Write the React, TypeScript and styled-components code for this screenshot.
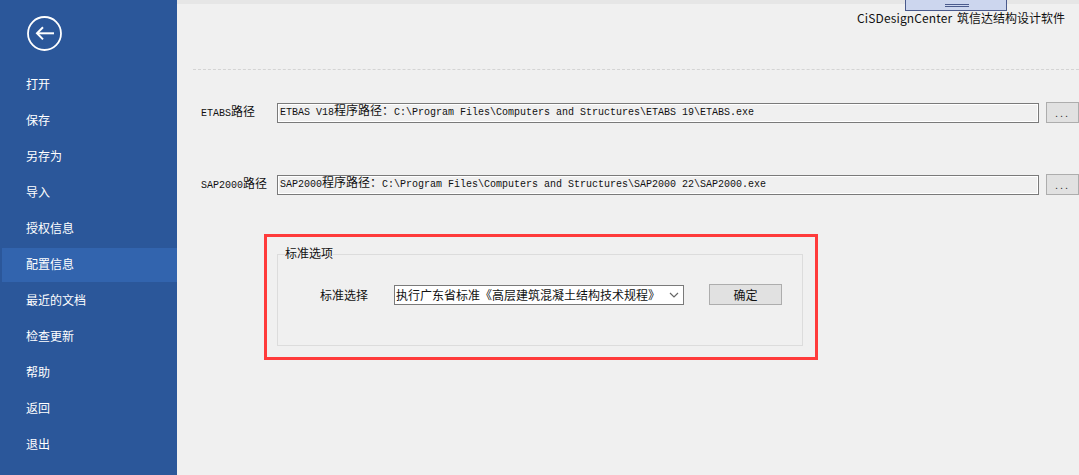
import styled, { createGlobalStyle } from "styled-components";

const Global = createGlobalStyle`
  html, body { margin: 0; padding: 0; background: #f0f0f0; }
  body { font-family: "Noto Sans CJK SC", "Liberation Sans", sans-serif; }
`;

const Page = styled.div`
  display: flex;
  width: 1079px;
  height: 475px;
  overflow: hidden;
`;

const Sidebar = styled.nav`
  display: flex;
  flex-direction: column;
  flex: none;
  width: 177px;
  height: 475px;
  background: #2b579a;
`;

const BackButton = styled.div`
  display: flex;
  margin: 16px 0 0 27px;
  width: 35px;
  height: 35px;
`;

const Menu = styled.div`
  display: flex;
  flex-direction: column;
  gap: 2px;
  margin-top: 17px;
`;

const MenuItem = styled.div<{ $active?: boolean }>`
  display: flex;
  align-items: center;
  box-sizing: border-box;
  height: 34px;
  margin-left: 2px;
  padding: 0 0 4px 24px;
  font-size: 12px;
  color: #fff;
  background: ${(p) => (p.$active ? "#3264ae" : "transparent")};
`;

const Main = styled.main`
  position: relative;
  flex: 1;
  display: flex;
  flex-direction: column;
  min-width: 0;
  background: #f0f0f0;
`;

const TopStrip = styled.div`
  flex: none;
  height: 4px;
  background: #e6e6e6;
`;

const Handle = styled.div`
  position: absolute;
  top: 0;
  left: 728px;
  width: 102px;
  height: 11px;
  box-sizing: border-box;
  background: #ccd6ee;
  border: 1px solid #4a5a8c;
  border-top: none;
  &::after {
    content: "";
    position: absolute;
    left: 39px;
    top: 4px;
    width: 24px;
    height: 1px;
    border-top: 1px solid #4a5a8c;
    border-bottom: 1px solid #4a5a8c;
  }
`;

const Brand = styled.div`
  align-self: flex-end;
  margin: 6px 14px 0 0;
  height: 16px;
  line-height: 16px;
  font-size: 12px;
  color: #111;
  white-space: nowrap;
`;

const BrandLatin = styled.span`
  letter-spacing: 0.13px;
  margin-right: 2px;
`;

const Divider = styled.div`
  margin: 43px 0 0 16px;
  border-top: 1px dashed #d4d4d4;
`;

const PathRow = styled.div<{ $gap: number }>`
  display: flex;
  align-items: center;
  margin-top: ${(p) => p.$gap}px;
  padding-left: 24px;
  height: 21px;
`;

const PathLabel = styled.label`
  flex: none;
  width: 76px;
  padding-bottom: 4px;
  font-family: "Liberation Mono", "Noto Sans CJK SC", monospace;
  font-size: 10px;
  color: #111;
  white-space: nowrap;
`;

const PathField = styled.div`
  flex: none;
  box-sizing: border-box;
  width: 762px;
  height: 20px;
  padding-left: 2px;
  line-height: 12px;
  background: #f0f0f0;
  border: 1px solid #7a7a7a;
  box-shadow: inset 0 0 0 1px #fff;
  font-family: "Liberation Mono", "Noto Sans CJK SC", monospace;
  font-size: 10px;
  color: #111;
  white-space: nowrap;
`;

const Cjk = styled.span`
  font-family: "Noto Sans CJK SC", sans-serif;
  font-size: 12px;
`;

const BrowseButton = styled.button`
  flex: none;
  box-sizing: border-box;
  width: 33px;
  height: 21px;
  margin-left: 7px;
  padding: 0;
  background: #e1e1e1;
  border: 1px solid #adadad;
  font-family: "Liberation Sans", sans-serif;
  font-size: 11px;
  letter-spacing: 2px;
  color: #333;
`;

const GroupBox = styled.fieldset`
  box-sizing: border-box;
  width: 526px;
  height: 99px;
  margin: 52px 0 0 100px;
  padding: 0;
  border: 1px solid #dcdcdc;
  display: block;
`;

const GroupTitle = styled.legend`
  margin-left: 7px;
  padding: 0;
  height: 14px;
  line-height: 12px;
  font-size: 12px;
  color: #111;
`;

const GroupRow = styled.div`
  display: flex;
  align-items: center;
  margin: 23px 0 0 42px;
  height: 21px;
`;

const SelectLabel = styled.span`
  flex: none;
  width: 74px;
  font-size: 12px;
  color: #111;
`;

const SelectBox = styled.div`
  flex: none;
  display: flex;
  align-items: center;
  box-sizing: border-box;
  width: 290px;
  height: 20px;
  padding: 0 4px 0 1px;
  background: #fff;
  border: 1px solid #7a7a7a;
  font-size: 12px;
  color: #111;
  white-space: nowrap;
`;

const SelectText = styled.span`
  flex: 1;
`;

const ConfirmButton = styled.button`
  flex: none;
  box-sizing: border-box;
  width: 73px;
  height: 21px;
  margin-left: 25px;
  padding: 0;
  background: #e1e1e1;
  border: 1px solid #adadad;
  font-family: "Noto Sans CJK SC", sans-serif;
  font-size: 12px;
  color: #111;
`;

const Callout = styled.div`
  position: absolute;
  left: 87px;
  top: 234px;
  width: 554px;
  height: 126px;
  box-sizing: border-box;
  border: 3px solid #ff3b3b;
  pointer-events: none;
`;

const menu = [
  "打开",
  "保存",
  "另存为",
  "导入",
  "授权信息",
  "配置信息",
  "最近的文档",
  "检查更新",
  "帮助",
  "返回",
  "退出",
];

export default function App() {
  return (
    <Page>
      <Global />
      <Sidebar>
        <BackButton>
          <svg width="35" height="35" viewBox="0 0 35 35" fill="none" stroke="#fff">
            <circle cx="17.5" cy="17.5" r="16.5" strokeWidth="1.8" />
            <path d="M27 17.3H10" strokeWidth="2" />
            <path d="M16 11.2 10 17.3 16 23.4" strokeWidth="2" />
          </svg>
        </BackButton>
        <Menu>
          {menu.map((item) => (
            <MenuItem key={item} $active={item === "配置信息"}>
              {item}
            </MenuItem>
          ))}
        </Menu>
      </Sidebar>
      <Main>
        <TopStrip />
        <Handle />
        <Brand>
          <BrandLatin>CiSDesignCenter</BrandLatin> 筑信达结构设计软件
        </Brand>
        <Divider />
        <PathRow $gap={32}>
          <PathLabel>
            ETABS<Cjk>路径</Cjk>
          </PathLabel>
          <PathField>
            ETBAS V18<Cjk>程序路径：</Cjk>C:\Program Files\Computers and Structures\ETABS 19\ETABS.exe
          </PathField>
          <BrowseButton>...</BrowseButton>
        </PathRow>
        <PathRow $gap={51}>
          <PathLabel>
            SAP2000<Cjk>路径</Cjk>
          </PathLabel>
          <PathField>
            SAP2000<Cjk>程序路径：</Cjk>C:\Program Files\Computers and Structures\SAP2000 22\SAP2000.exe
          </PathField>
          <BrowseButton>...</BrowseButton>
        </PathRow>
        <GroupBox>
          <GroupTitle>标准选项</GroupTitle>
          <GroupRow>
            <SelectLabel>标准选择</SelectLabel>
            <SelectBox>
              <SelectText>执行广东省标准《高层建筑混凝土结构技术规程》</SelectText>
              <svg width="10" height="6" viewBox="0 0 10 6" fill="none" stroke="#666" strokeWidth="1.2">
                <path d="M1 1 5 5 9 1" />
              </svg>
            </SelectBox>
            <ConfirmButton>确定</ConfirmButton>
          </GroupRow>
        </GroupBox>
        <Callout />
      </Main>
    </Page>
  );
}
